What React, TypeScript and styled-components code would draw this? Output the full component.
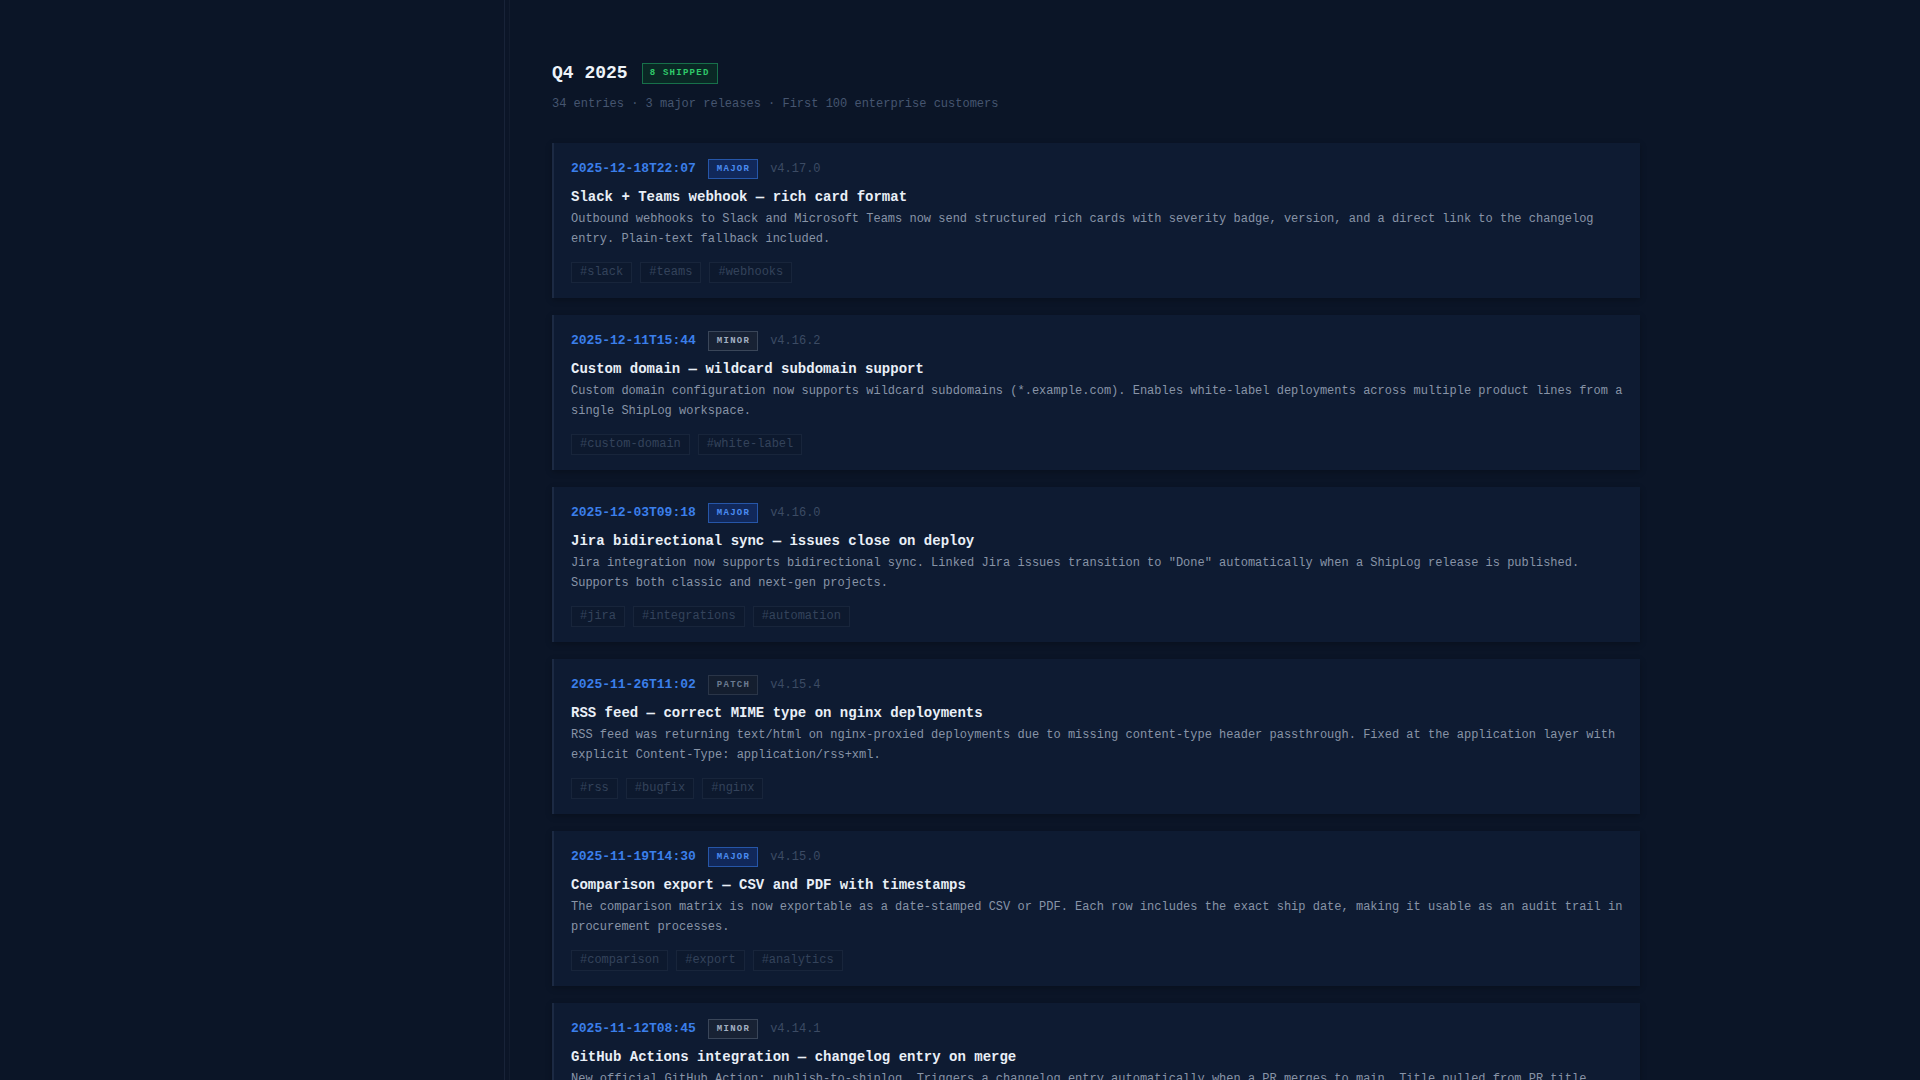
import styled, { createGlobalStyle } from "styled-components";

type Level = "major" | "minor" | "patch";

interface Entry {
  id: number;
  date: string;
  level: Level;
  version: string;
  title: string;
  body: string;
  tags: string[];
}

const entries: Entry[] = [
  {
    id: 1,
    date: "2025-12-18T22:07",
    level: "major",
    version: "v4.17.0",
    title: "Slack + Teams webhook — rich card format",
    body: "Outbound webhooks to Slack and Microsoft Teams now send structured rich cards with severity badge, version, and a direct link to the changelog entry. Plain-text fallback included.",
    tags: ["slack", "teams", "webhooks"],
  },
  {
    id: 2,
    date: "2025-12-11T15:44",
    level: "minor",
    version: "v4.16.2",
    title: "Custom domain — wildcard subdomain support",
    body: "Custom domain configuration now supports wildcard subdomains (*.example.com). Enables white-label deployments across multiple product lines from a single ShipLog workspace.",
    tags: ["custom-domain", "white-label"],
  },
  {
    id: 3,
    date: "2025-12-03T09:18",
    level: "major",
    version: "v4.16.0",
    title: "Jira bidirectional sync — issues close on deploy",
    body: 'Jira integration now supports bidirectional sync. Linked Jira issues transition to "Done" automatically when a ShipLog release is published. Supports both classic and next-gen projects.',
    tags: ["jira", "integrations", "automation"],
  },
  {
    id: 4,
    date: "2025-11-26T11:02",
    level: "patch",
    version: "v4.15.4",
    title: "RSS feed — correct MIME type on nginx deployments",
    body: "RSS feed was returning text/html on nginx-proxied deployments due to missing content-type header passthrough. Fixed at the application layer with explicit Content-Type: application/rss+xml.",
    tags: ["rss", "bugfix", "nginx"],
  },
  {
    id: 5,
    date: "2025-11-19T14:30",
    level: "major",
    version: "v4.15.0",
    title: "Comparison export — CSV and PDF with timestamps",
    body: "The comparison matrix is now exportable as a date-stamped CSV or PDF. Each row includes the exact ship date, making it usable as an audit trail in procurement processes.",
    tags: ["comparison", "export", "analytics"],
  },
  {
    id: 6,
    date: "2025-11-12T08:45",
    level: "minor",
    version: "v4.14.1",
    title: "GitHub Actions integration — changelog entry on merge",
    body: "New official GitHub Action: publish-to-shiplog. Triggers a changelog entry automatically when a PR merges to main. Title pulled from PR title, body from the PR description.",
    tags: ["github", "ci-cd", "automation"],
  },
];

const levelColors: Record<Level, { bg: string; border: string; fg: string }> = {
  major: { bg: "#11285a", border: "#2656a8", fg: "#4b8cf2" },
  minor: { bg: "#182234", border: "#3a4659", fg: "#a3b0c2" },
  patch: { bg: "#141e2f", border: "#2a3548", fg: "#6b7a90" },
};

const GlobalStyle = createGlobalStyle`
  html, body {
    margin: 0;
    padding: 0;
    background: #0b1527;
  }
  body {
    font-family: "Liberation Mono", "DejaVu Sans Mono", monospace;
    overflow: hidden;
  }
  * { box-sizing: border-box; }
`;

const Shell = styled.div`
  display: flex;
  height: 1080px;
  overflow: hidden;
  background: #0b1527;
`;

const Sidebar = styled.aside`
  width: 505px;
  flex-shrink: 0;
  border-right: 1px solid #182338;
`;

const Main = styled.main`
  flex: 1;
  margin-left: 4px;
  border-left: 1px solid #121c2e;
  padding: 61px 0 0 42px;
`;

const Content = styled.div`
  max-width: 1088px;
`;

const HeadRow = styled.div`
  display: flex;
  align-items: center;
  gap: 14px;
  height: 24px;
`;

const Quarter = styled.h1`
  margin: 0;
  font-size: 18px;
  line-height: 24px;
  font-weight: 700;
  color: #eef3f9;
`;

const Shipped = styled.span`
  font-size: 9px;
  line-height: 15px;
  font-weight: 700;
  letter-spacing: 0.14em;
  padding: 2px 7px;
  border: 1px solid #17704a;
  background: #0a2825;
  color: #2fca6a;
`;

const Meta = styled.p`
  margin: 10px 0 0;
  font-size: 12px;
  line-height: 18px;
  color: #465570;
`;

const List = styled.div`
  display: flex;
  flex-direction: column;
  gap: 17px;
  margin-top: 30px;
`;

const Card = styled.article`
  background: #0e1b32;
  border-left: 2px solid #1c2a43;
  padding: 16px 17px 15px;
  box-shadow: 0 2px 6px rgba(0, 0, 0, 0.25);
`;

const TopRow = styled.div`
  display: flex;
  align-items: center;
  height: 19px;
`;

const Stamp = styled.span`
  font-size: 13px;
  line-height: 19px;
  font-weight: 700;
  color: #3b7fea;
`;

const Badge = styled.span<{ $level: Level }>`
  margin-left: 12px;
  font-size: 9px;
  line-height: 14px;
  font-weight: 700;
  letter-spacing: 0.14em;
  padding: 2px 7px 2px 8px;
  border: 1px solid ${(p) => levelColors[p.$level].border};
  background: ${(p) => levelColors[p.$level].bg};
  color: ${(p) => levelColors[p.$level].fg};
`;

const Version = styled.span`
  margin-left: 12px;
  font-size: 12px;
  color: #3c4b64;
`;

const Title = styled.h2`
  margin: 9px 0 0;
  font-size: 14px;
  line-height: 20px;
  font-weight: 700;
  color: #e9eff7;
`;

const Body = styled.p`
  margin: 2px 0 0;
  font-size: 12px;
  line-height: 20px;
  color: #8894a7;
`;

const Tags = styled.div`
  display: flex;
  gap: 8px;
  margin-top: 13px;
`;

const Tag = styled.span`
  font-size: 12px;
  line-height: 17px;
  padding: 1px 8px;
  border: 1px solid #18253b;
  background: #0d192e;
  color: #34435b;
`;

export default function App() {
  return (
    <>
      <GlobalStyle />
      <Shell>
        <Sidebar />
        <Main>
          <Content>
            <HeadRow>
              <Quarter>Q4 2025</Quarter>
              <Shipped>8 SHIPPED</Shipped>
            </HeadRow>
            <Meta>34 entries · 3 major releases · First 100 enterprise customers</Meta>
            <List>
              {entries.map((e) => (
                <Card key={e.id}>
                  <TopRow>
                    <Stamp>{e.date}</Stamp>
                    <Badge $level={e.level}>{e.level.toUpperCase()}</Badge>
                    <Version>{e.version}</Version>
                  </TopRow>
                  <Title>{e.title}</Title>
                  <Body>{e.body}</Body>
                  <Tags>
                    {e.tags.map((t) => (
                      <Tag key={t}>#{t}</Tag>
                    ))}
                  </Tags>
                </Card>
              ))}
            </List>
          </Content>
        </Main>
      </Shell>
    </>
  );
}
